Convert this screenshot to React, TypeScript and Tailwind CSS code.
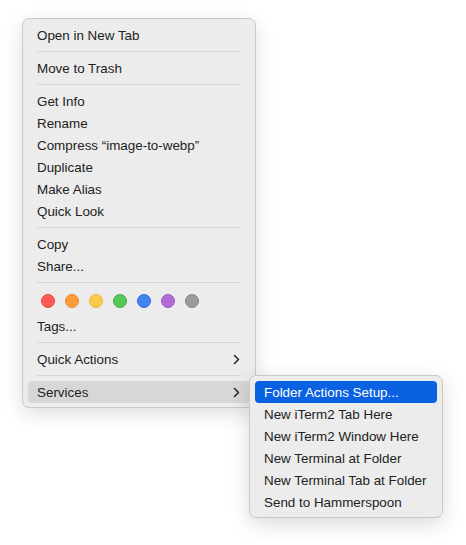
const font = { fontFamily: '"Liberation Sans", Arial, sans-serif' };

type Row =
  | { kind: 'item'; label: string; submenu?: boolean; active?: boolean }
  | { kind: 'sep' }
  | { kind: 'tags' };

const mainRows: Row[] = [
  { kind: 'item', label: 'Open in New Tab' },
  { kind: 'sep' },
  { kind: 'item', label: 'Move to Trash' },
  { kind: 'sep' },
  { kind: 'item', label: 'Get Info' },
  { kind: 'item', label: 'Rename' },
  { kind: 'item', label: 'Compress \u201Cimage-to-webp\u201D' },
  { kind: 'item', label: 'Duplicate' },
  { kind: 'item', label: 'Make Alias' },
  { kind: 'item', label: 'Quick Look' },
  { kind: 'sep' },
  { kind: 'item', label: 'Copy' },
  { kind: 'item', label: 'Share...' },
  { kind: 'sep' },
  { kind: 'tags' },
  { kind: 'item', label: 'Tags...' },
  { kind: 'sep' },
  { kind: 'item', label: 'Quick Actions', submenu: true },
  { kind: 'sep' },
  { kind: 'item', label: 'Services', submenu: true, active: true },
];

const services = [
  'Folder Actions Setup...',
  'New iTerm2 Tab Here',
  'New iTerm2 Window Here',
  'New Terminal at Folder',
  'New Terminal Tab at Folder',
  'Send to Hammerspoon',
];

const tagColors = [
  'bg-[#fb5b53] border-[#e4463f]',
  'bg-[#fb9c3a] border-[#e88a2a]',
  'bg-[#f9cc47] border-[#e6b936]',
  'bg-[#55c75b] border-[#40b047]',
  'bg-[#3f86f3] border-[#2c6fdc]',
  'bg-[#b26ad6] border-[#9c56c0]',
  'bg-[#9b9b9b] border-[#878787]',
];

function Chevron() {
  return (
    <svg width="7" height="11" viewBox="0 0 7 11" fill="none">
      <path d="M1.5 1.5L5.5 5.5L1.5 9.5" stroke="#2a2a2a" strokeWidth="1.6" strokeLinecap="round" strokeLinejoin="round" />
    </svg>
  );
}

export default function App() {
  return (
    <div className="min-h-[545px] w-[466px] bg-white pl-[22px] pt-[18px]" style={font}>
      <div className="relative w-[234px]">
        <div className="rounded-[7px] border border-[#c9c9c9] bg-[#ececec] pt-[5px] pb-[4px] shadow-[0_6px_20px_rgba(0,0,0,0.13)]">
          {mainRows.map((row, i) => {
            if (row.kind === 'sep') {
              return (
                <div key={i} className="flex h-[11px] items-center px-[14px]">
                  <div className="h-px w-full bg-[#d6d6d6]" />
                </div>
              );
            }
            if (row.kind === 'tags') {
              return (
                <div key={i} className="flex h-[27px] items-center gap-[10px] pl-[18px] pb-px">
                  {tagColors.map((c, j) => (
                    <span key={j} className={`h-[14px] w-[14px] rounded-full border ${c}`} />
                  ))}
                </div>
              );
            }
            return (
              <div
                key={i}
                className={`mx-[5px] flex h-[22px] items-center justify-between rounded-[4px] pl-[9px] pr-[10px] text-[13.4px] text-[#222222] ${
                  row.active ? 'bg-[#d7d7d7]' : ''
                }`}
              >
                <span className="pt-[2px]">{row.label}</span>
                {row.submenu && <Chevron />}
              </div>
            );
          })}
        </div>

        <div className="absolute left-[227px] top-[357px] w-[194px] rounded-[7px] border border-[#c9c9c9] bg-[#ececec] pt-[5px] pb-[4px] shadow-[0_6px_20px_rgba(0,0,0,0.15)]">
          {services.map((s, i) => (
            <div
              key={s}
              className={`mx-[5px] flex h-[22px] items-center rounded-[4px] pl-[9px] text-[13.4px] ${
                i === 0 ? 'bg-[#0a62e2] text-white' : 'text-[#222222]'
              }`}
            >
              <span className="pt-[2px]">{s}</span>
            </div>
          ))}
        </div>
      </div>
    </div>
  );
}
